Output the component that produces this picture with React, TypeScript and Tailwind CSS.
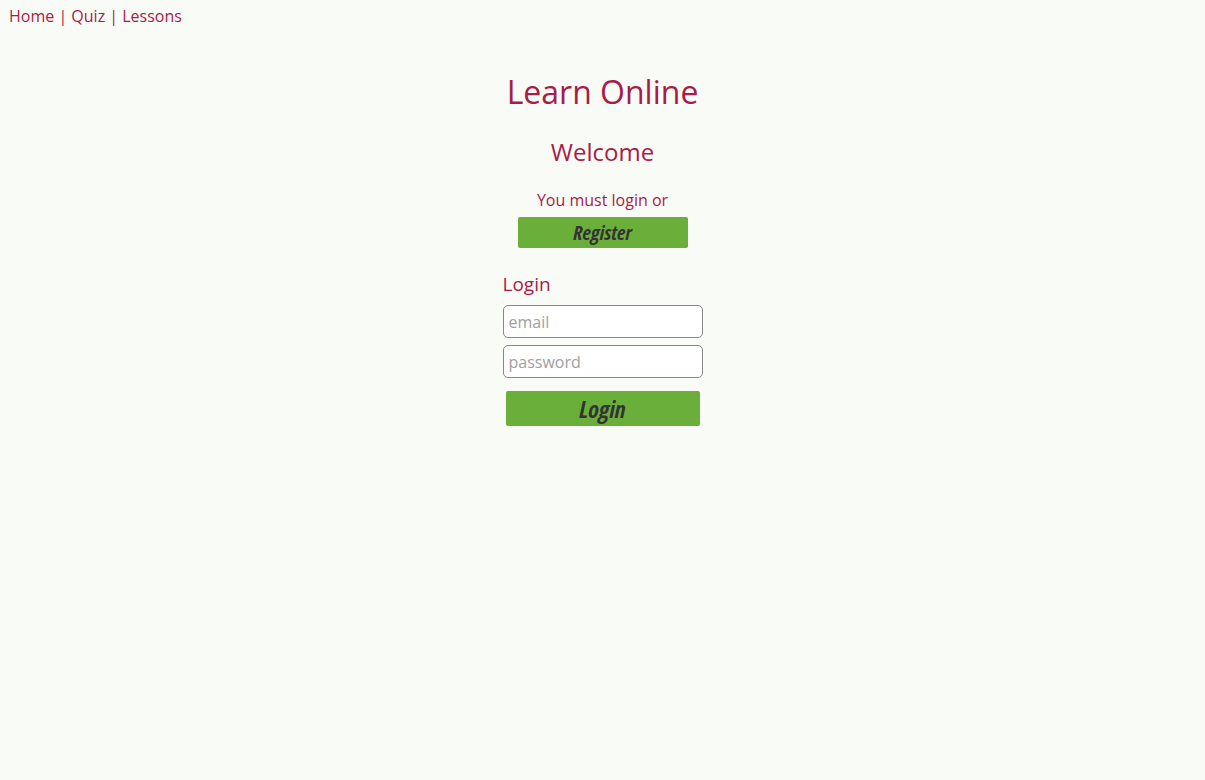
export default function App() {
  return (
    <div
      className="min-h-screen bg-[#f9fbf6] text-[#a81c48]"
      style={{ fontFamily: '"Open Sans", "Noto Sans", sans-serif' }}
    >
      <nav className="px-[9px] pt-[5px] text-[16px] leading-[22px]">
        <a href="#">Home</a> | <a href="#">Quiz</a> | <a href="#">Lessons</a>
      </nav>

      <main className="flex flex-col items-center">
        <h1 className="mt-[43px] text-[32px] leading-[44px]">Learn Online</h1>
        <h2 className="mt-[22px] text-[24px] leading-[32px]">Welcome</h2>
        <p className="mt-[21px] text-[16px] leading-[22px]">You must login or</p>
        <button className="mt-[6px] h-[31px] w-[170px] rounded-[2px] bg-[#6aaf3a] text-[20px] font-bold italic text-[#333] font-stretch-condensed">
          Register
        </button>

        <form className="mt-[23px] flex w-[200px] flex-col">
          <label className="text-[19px] leading-[26px]">Login</label>
          <input
            placeholder="email"
            className="mt-[8px] h-[33px] rounded-[5px] border border-[#888] bg-white px-[5px] text-[16px] text-[#333] placeholder:text-[#a0a0a0] outline-none"
          />
          <input
            type="password"
            placeholder="password"
            className="mt-[7px] h-[33px] rounded-[5px] border border-[#888] bg-white px-[5px] text-[16px] text-[#333] placeholder:text-[#a0a0a0] outline-none"
          />
          <button
            type="button"
            className="mx-auto mt-[13px] h-[35px] w-[194px] rounded-[2px] bg-[#6aaf3a] text-[24px] font-bold italic text-[#333] font-stretch-condensed"
          >
            Login
          </button>
        </form>
      </main>
    </div>
  )
}
